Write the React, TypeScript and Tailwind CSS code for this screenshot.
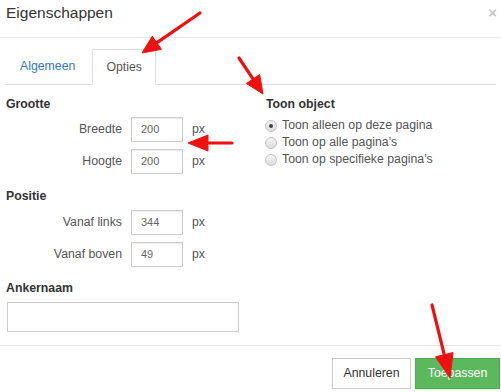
import React from "react";

type Arrow = { x1: number; y1: number; x2: number; y2: number; hl: number; hw: number };

function arrowParts(a: Arrow) {
  const dx = a.x2 - a.x1;
  const dy = a.y2 - a.y1;
  const len = Math.hypot(dx, dy);
  const ux = dx / len;
  const uy = dy / len;
  const bx = a.x2 - ux * a.hl;
  const by = a.y2 - uy * a.hl;
  const px = -uy * a.hw;
  const py = ux * a.hw;
  const pts = `${a.x2},${a.y2} ${bx + px},${by + py} ${bx - px},${by - py}`;
  return { bx: a.x2 - ux * (a.hl - 2), by: a.y2 - uy * (a.hl - 2), pts };
}

const arrows: Arrow[] = [
  { x1: 200, y1: 13, x2: 142, y2: 53, hl: 18, hw: 8 },
  { x1: 239, y1: 58, x2: 263, y2: 94, hl: 18, hw: 8 },
  { x1: 232, y1: 143, x2: 188, y2: 143, hl: 20, hw: 8 },
  { x1: 432, y1: 305, x2: 450, y2: 378, hl: 24, hw: 9 },
];

function FieldRow({ label, value, className }: { label: string; value: string; className: string }) {
  return (
    <div className={`flex items-center h-[25px] ${className}`}>
      <div className="w-[116px] text-right text-[12.3px] text-[#555]">{label}</div>
      <div className="ml-[9px] w-[52px] h-[25px] border border-[#ccc] shadow-[inset_0_1px_1px_rgba(0,0,0,0.075)] flex items-center pl-[9px] text-[11px] text-[#666]">
        {value}
      </div>
      <div className="ml-[9px] text-[12.3px] text-[#555]">px</div>
    </div>
  );
}

function Radio({ checked, label }: { checked?: boolean; label: string }) {
  return (
    <div className="flex items-center h-[17px]">
      <span className="w-[12px] h-[12px] rounded-full border border-[#c4c4c4] bg-gradient-to-b from-[#f4f4f4] to-[#dedede] flex items-center justify-center">
        {checked && <span className="w-[4px] h-[4px] rounded-full bg-[#444]" />}
      </span>
      <span className="ml-[5px] text-[12.3px] text-[#555]">{label}</span>
    </div>
  );
}

export default function App() {
  return (
    <div className="relative w-[501px] h-[392px] bg-white overflow-hidden font-['Liberation_Sans',Arial,sans-serif]">
      {/* Header */}
      <div className="h-[38px] border-b border-[#e5e5e5] flex items-start justify-between pl-[6px] pr-[4px] pt-[3px]">
        <div className="text-[15.5px] leading-[20px] text-[#333]">Eigenschappen</div>
        <div className="text-[15px] leading-[15px] font-bold text-[#c8c8c8] mt-[2px]">×</div>
      </div>

      {/* Tabs */}
      <div className="mt-[10px] mx-[5px] border-b border-[#ddd] flex items-end">
        <div className="ml-[1px] mr-[3px] h-[36px] px-[14px] flex items-center text-[12.3px] text-[#337ab7]">Algemeen</div>
        <div className="-mb-px h-[36px] px-[13px] flex items-center border border-[#ddd] border-b-white bg-white text-[12.3px] text-[#555]">
          Opties
        </div>
      </div>

      {/* Body */}
      <div className="px-[6px] flex">
        <div className="w-[254px]">
          <div className="mt-[11px] leading-[17px] text-[12.3px] font-bold text-[#333]">Grootte</div>
          <FieldRow label="Breedte" value="200" className="mt-[4px]" />
          <FieldRow label="Hoogte" value="200" className="mt-[7px]" />
          <div className="mt-[14px] leading-[17px] text-[12.3px] font-bold text-[#333]">Positie</div>
          <FieldRow label="Vanaf links" value="344" className="mt-[5px]" />
          <FieldRow label="Vanaf boven" value="49" className="mt-[7px]" />
          <div className="mt-[13px] leading-[17px] text-[12.3px] font-bold text-[#333]">Ankernaam</div>
          <div className="mt-[5px] ml-[1px] w-[232px] h-[30px] border border-[#ccc]" />
        </div>
        <div className="pl-[6px]">
          <div className="mt-[11px] leading-[17px] text-[12.3px] font-bold text-[#333]">Toon object</div>
          <div className="mt-[4px] -ml-[1px]">
            <Radio checked label="Toon alleen op deze pagina" />
            <Radio label="Toon op alle pagina's" />
            <Radio label="Toon op specifieke pagina's" />
          </div>
        </div>
      </div>

      {/* Footer */}
      <div className="mt-[13px] border-t border-[#e5e5e5] pt-[12px] pr-[1px] flex justify-end gap-[4px]">
        <div className="w-[79px] h-[31px] border border-[#ccc] bg-white flex items-center justify-center text-[12.3px] text-[#333]">
          Annuleren
        </div>
        <div className="w-[85px] h-[31px] border border-[#4cae4c] bg-[#5cb85c] flex items-center justify-center text-[12.3px] text-white">
          Toepassen
        </div>
      </div>

      {/* Annotation arrows */}
      <svg className="absolute left-0 top-0 pointer-events-none" width="501" height="392" viewBox="0 0 501 392">
        {arrows.map((a, i) => {
          const p = arrowParts(a);
          return (
            <g key={i} fill="#f01010" stroke="#f01010">
              <line x1={a.x1} y1={a.y1} x2={p.bx} y2={p.by} strokeWidth={3.2} strokeLinecap="round" />
              <polygon points={p.pts} strokeWidth={1} strokeLinejoin="round" />
            </g>
          );
        })}
      </svg>
    </div>
  );
}
